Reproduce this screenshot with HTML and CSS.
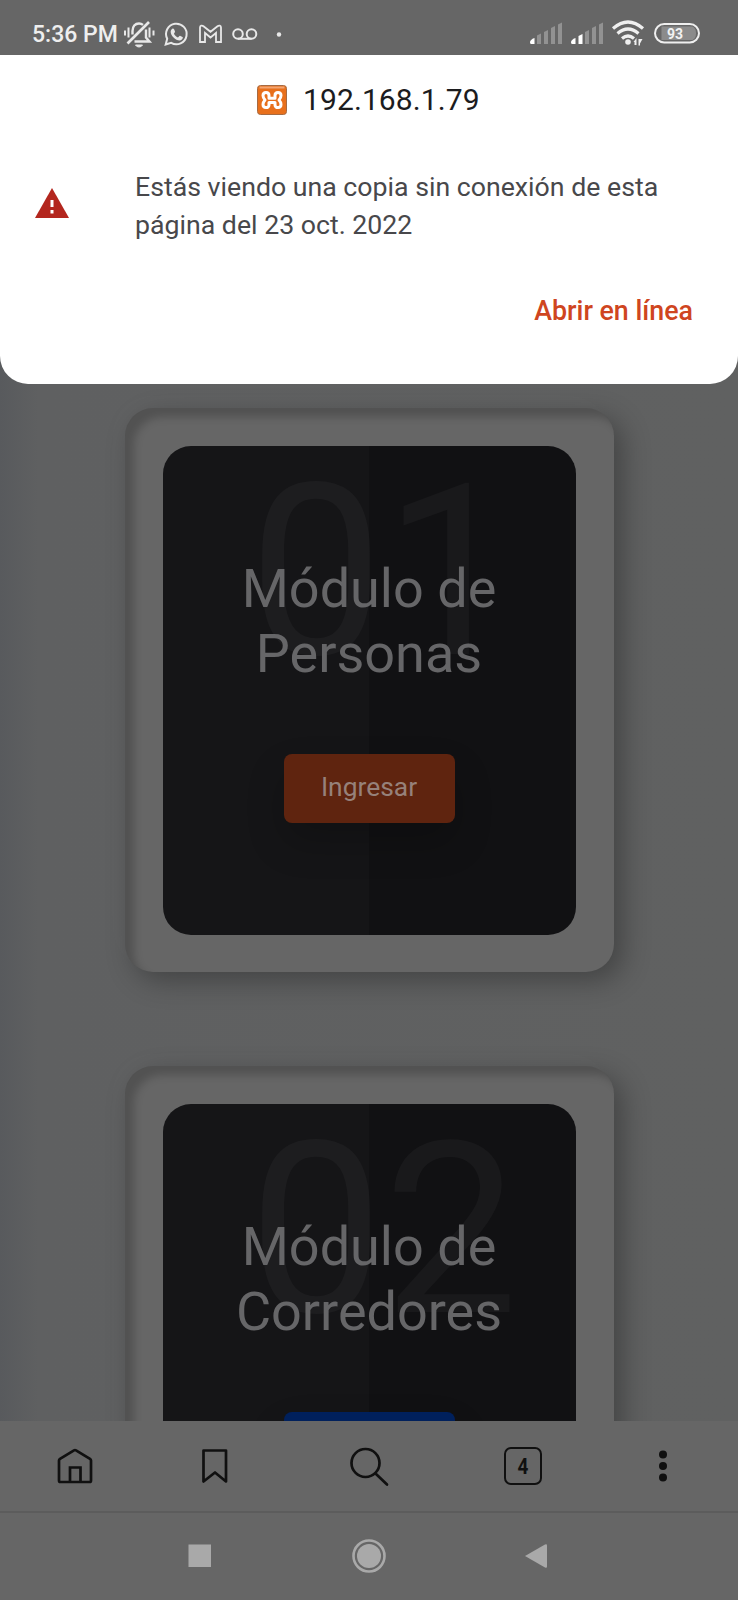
FILE: index.html
```html
<!DOCTYPE html>
<html lang="es">
<head>
<meta charset="utf-8">
<title>192.168.1.79</title>
<link rel="stylesheet" href="styles.css">
</head>
<body>
<div class="screen">
  <header class="status">
    <span class="clock">5:36 PM</span>
    <svg class="status-left" width="164" height="28" viewBox="0 0 164 28" fill="none" stroke="#e8e8e8" stroke-width="2">
      <path d="M1 9.500v5M4.500 6.500v10M25.500 6.500v10M29.500 9.500v5"/>
      <path d="M8.500 13.500V10c0-4.500 2.500-7.500 6.500-7.500 1.800 0 3 .6 4 1.400M22 8.500v8l3.500 4H10.500" stroke-width="2.400"/>
      <path d="M11.500 24h7q-1 2-3.500 2t-3.500-2z" fill="#e8e8e8" stroke-width="1"/>
      <path d="M3.500 22.500L25 1" stroke-width="2.600"/>
      <path d="M41.700 23.500l1.500-5.800a10.300 10.300 0 1 1 4 4.200z" stroke-width="2"/>
      <path d="M47.500 8.500c1-1.500 2-1.500 2.700 0l.8 2c.2.800-1 1.600-1 2.200.6 1.600 2.600 3.300 4 3.700.7-.1 1.200-1.700 2-1.600l2.500 1.300c1 .6-.3 3.200-2.500 3.400-4 .4-9.500-5-9.300-8.500 0-1 .3-2 .8-2.500z" fill="#e8e8e8" stroke="none"/>
      <path d="M76 21V6.500c0-2 2-2.500 3.500-1.300l7 5.600 7-5.600c1.500-1.200 3.500-.7 3.500 1.300V21h-5v-9l-5.500 4.500L81 12v9z" stroke-width="1.800"/>
      <circle cx="114" cy="13" r="4.800"/><circle cx="127.500" cy="13" r="4.800"/><path d="M114 17.800h13.500"/>
      <circle cx="155" cy="13.500" r="2.200" fill="#e8e8e8" stroke="none"/>
    </svg>
    <svg class="status-right" width="174" height="28" viewBox="0 0 174 28" fill="#929292">
      <path d="M7 15.500l4-2V24H7zM14 12l4-2v14h-4zM21 8l4-2v18h-4zM28 4.500l4-2V24h-4z"/>
      <path d="M0 22.500q0-3 4.500-4.500v6h-3Q0 24 0 22.500zM41 22.500q0-3 4.500-4.500v6h-3Q41 24 41 22.500zM48.500 16l4-2v10h-4z" fill="#fff"/>
      <path d="M55 12l4-2v14h-4zM62 8l4-2v18h-4zM69 4.500l4-2V24h-4z"/>
      <g fill="none" stroke="#efefef" stroke-width="3.200"><path d="M83 8.500q15-13 30 0M87.500 13.500q10.500-9 21 0M92 18.500q6-5 12 0"/></g>
      <circle cx="98" cy="22" r="2.800" fill="#efefef"/>
      <path d="M103.500 22l3-4v7h-2v-3zM108.500 19h4l-2.500 4.500V25.500h-1.500z" fill="#efefef"/>
      <rect x="125" y="4" width="44" height="18.500" rx="9.200" fill="none" stroke="#efefef" stroke-width="2"/>
      <path d="M131.500 6.500h31q3.500 1.500 3.500 6.700t-3.500 6.800h-31z" fill="#8b8b8b"/>
      <text x="145" y="18.500" text-anchor="middle" class="battery">93</text>
    </svg>
  </header>

  <main class="page">
    <section class="sheet">
      <div class="site">
        <svg width="30" height="30" viewBox="0 0 30 30">
          <rect x=".5" y=".5" width="29" height="29" rx="3" fill="#e8701c" stroke="#a66a42"/>
          <path d="M2.500 2.500h25" stroke="#f3a572" stroke-width="2"/>
          <path d="M12 13.200V10.500C12 6.500 6 6.500 6 10.500c0 2 .8 3.200 2 4.500-1.200 1.300-2 2.500-2 4.500 0 4 6 4 6 .5v-2.500h6V20c0 3.500 6 3.500 6-.5 0-2-.8-3.200-2-4.500 1.200-1.300 2-2.500 2-4.500 0-4-6-4-6 0v2.700z" fill="none" stroke="#fff" stroke-width="3" stroke-linejoin="round"/>
        </svg>
        <span>192.168.1.79</span>
      </div>
      <div class="notice">
        <svg width="34" height="30" viewBox="0 0 34 30"><path d="M17 0L34 30H0z" fill="#b3261e"/><path d="M17 12v7M17 22v3.500" stroke="#fff" stroke-width="3"/></svg>
        <p>Estás viendo una copia sin conexión de esta<br>página del 23 oct. 2022</p>
      </div>
      <a class="open">Abrir en línea</a>
    </section>

    <article class="card">
      <div class="box">
        <span class="number">01</span>
        <h3>Módulo de Personas</h3>
        <a class="enter">Ingresar</a>
      </div>
    </article>
    <article class="card">
      <div class="box">
        <span class="number">02</span>
        <h3>Módulo de Corredores</h3>
        <a class="enter blue"></a>
      </div>
    </article>
  </main>

  <nav class="toolbar">
    <svg width="38" height="38" viewBox="0 0 38 38"><path d="M3 13.500v20q0 1.500 1.500 1.500h29q1.500 0 1.500-1.500v-20q0-1-1-1.700L20 3.300q-1-.6-2 0L4 11.800q-1 .7-1 1.700zM14 35V20.500h10.500V35"/></svg>
    <svg width="38" height="38" viewBox="0 0 38 38"><path d="M7.500 3.500h22.500v31L19 25.500 7.500 34.500z" stroke-linejoin="round"/></svg>
    <svg width="42" height="42" viewBox="0 0 42 42"><circle cx="17.500" cy="18" r="14"/><path d="M27.500 28.500L39 39.500" stroke-linecap="round"/></svg>
    <span class="tabs"><span>4</span></span>
    <svg class="more" width="10" height="34" viewBox="0 0 10 34"><circle cx="5" cy="5.500" r="4"/><circle cx="5" cy="17" r="4"/><circle cx="5" cy="28.500" r="4"/></svg>
  </nav>
  <nav class="system">
    <svg width="36" height="36" viewBox="0 0 36 36"><rect x="6.500" y="6.500" width="22.500" height="22.500"/></svg>
    <svg width="36" height="36" viewBox="0 0 36 36"><circle cx="18" cy="18" r="15.500" fill="none" stroke="#a9a9a9" stroke-width="2.600"/><circle cx="18" cy="18" r="12"/></svg>
    <svg width="36" height="36" viewBox="0 0 36 36"><path d="M7 18L27 6.500q2-1 2 1v21q0 2-2 1z"/></svg>
  </nav>
</div>
</body>
</html>
```
FILE: styles.css
```css
* { box-sizing: border-box; }
body { margin: 0; font-family: Roboto, sans-serif; }
.screen { width: 738px; height: 1600px; display: flex; flex-direction: column; overflow: hidden; background: #666; }
.status { flex: none; height: 55px; padding: 20px 34px 0 32px; display: flex; background: #666; }
.clock { width: 92px; color: #eee; font-size: 23px; font-weight: 500; line-height: 30px; white-space: nowrap; }
.status-left { margin-top: 1px; }
.status-right { margin-left: auto; }
.battery { font: 700 14px Roboto, sans-serif; fill: #f2f2f2; }

.page { height: 1366px; flex: none; overflow: hidden; background: linear-gradient(90deg, #585a5d 0, #5f6061 38px, #606161 100%); display: flex; flex-direction: column; align-items: center; }
.sheet { flex: none; width: 738px; height: 329px; margin-bottom: 24px; padding: 26px 45px 0 35px; background: #fff; border-radius: 0 0 28px 28px; display: flex; flex-direction: column; }
.site { display: flex; align-items: center; gap: 16px; height: 36px; padding-left: 222px; font-size: 30px; letter-spacing: .1px; color: #1c1c1e; }
.site svg { margin-top: 2px; }
.notice { display: flex; align-items: center; margin-top: 51px; height: 76px; color: #48484b; }
.notice svg { margin-bottom: 7px; }
.notice p { margin: 0 0 0 66px; font-size: 26.7px; line-height: 38px; white-space: nowrap; }
.open { margin-top: 47px; align-self: flex-end; font-size: 26.8px; line-height: 40px; font-weight: 500; color: #cf4520; }

.card { flex: none; width: 489px; height: 564px; margin-bottom: 94px; padding: 38px; border-radius: 28px; background: #666;
  box-shadow: inset 9px 9px 9px rgba(0,0,0,.2), 9px 9px 28px rgba(0,0,0,.3), -9px -9px 28px rgba(255,255,255,.02); }
.box { position: relative; height: 489px; border-radius: 28px; padding-top: 110px; display: flex; flex-direction: column; align-items: center; background: linear-gradient(90deg, #151517 50%, #111113 50%); }
.number { position: absolute; top: -14px; right: 57px; font-size: 240px; line-height: 1.17; color: rgba(255,255,255,.035); }
h3 { position: relative; margin: 0; width: 300px; text-align: center; font-size: 54px; line-height: 65px; font-weight: 400; color: #666668; }
.enter { position: relative; margin-top: 68px; width: 171px; height: 69px; border-radius: 8px; background: #5f240f; color: #96817a; text-align: center; font-size: 26.4px; line-height: 67px; box-shadow: 0 19px 38px rgba(0,0,0,.2); }
.blue { background: #00205c; }

.toolbar { flex: none; height: 92px; border-bottom: 2px solid #5c5c5c; display: grid; grid-template-columns: 150px 129px 180px 128px 151px; place-items: center; }
.toolbar svg { fill: none; stroke: #101010; stroke-width: 2.7; }
.toolbar .more { fill: #101010; stroke: none; }
.tabs { width: 38px; height: 38px; border: 2.5px solid #101010; border-radius: 7px; text-align: center; font: 700 22px/35px Roboto, sans-serif; color: #101010; }
.tabs span { display: block; transform: scaleX(.86); }
.system { flex: none; height: 85px; padding-left: 116px; display: grid; grid-template-columns: 168px 169px 166px; fill: #a9a9a9; place-items: center; }
```
